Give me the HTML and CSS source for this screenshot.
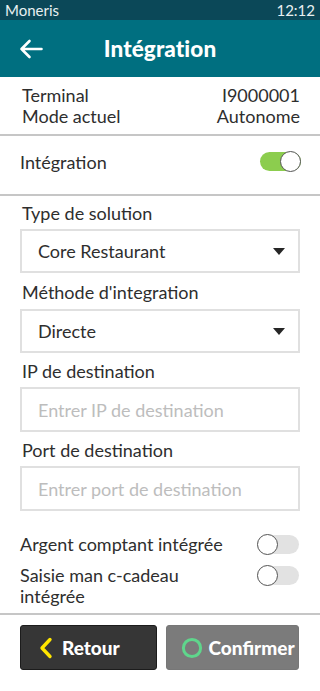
FILE: index.html
```html
<!DOCTYPE html>
<html lang="fr">
<head>
<meta charset="utf-8">
<link rel="stylesheet" href="styles.css">
</head>
<body>
<div class="screen">
  <div class="status">
    <span>Moneris</span>
    <span>12:12</span>
  </div>
  <div class="header">
    <svg class="back" width="24" height="20" viewBox="0 0 24 20">
      <path d="M22.5 10H2.5M10.5 2L2.5 10L10.5 18" fill="none" stroke="#fff" stroke-width="2.6" stroke-linecap="round" stroke-linejoin="round"/>
    </svg>
    <h1 class="title">Intégration</h1>
    <span></span>
  </div>
  <div class="info">
    <div class="info-row"><span>Terminal</span><span>I9000001</span></div>
    <div class="info-row"><span>Mode actuel</span><span>Autonome</span></div>
  </div>
  <div class="toggle-main">
    <span>Intégration</span>
    <span class="switch on"><span class="knob"></span></span>
  </div>
  <div class="form">
    <div class="label first">Type de solution</div>
    <div class="box select"><span>Core Restaurant</span><span class="caret"></span></div>
    <div class="label">Méthode d'integration</div>
    <div class="box select"><span>Directe</span><span class="caret"></span></div>
    <div class="label short">IP de destination</div>
    <div class="box input"><span>Entrer IP de destination</span></div>
    <div class="label short">Port de destination</div>
    <div class="box input"><span>Entrer port de destination</span></div>
  </div>
  <div class="options">
    <div class="opt-row">
      <span>Argent comptant intégrée</span>
      <span class="switch off"><span class="knob"></span></span>
    </div>
    <div class="opt-row two">
      <span>Saisie man c-cadeau<br>intégrée</span>
      <span class="switch off"><span class="knob"></span></span>
    </div>
  </div>
  <div class="footer">
    <button class="btn back-btn">
      <svg width="16" height="22" viewBox="0 0 16 22"><path d="M12 2.5L4 11L12 19.5" fill="none" stroke="#ffe600" stroke-width="3.4" stroke-linecap="round" stroke-linejoin="round"/></svg>
      <span>Retour</span>
    </button>
    <button class="btn confirm-btn">
      <svg width="22" height="22" viewBox="0 0 22 22"><circle cx="11" cy="11" r="8.6" fill="none" stroke="#5fd68c" stroke-width="3"/></svg>
      <span>Confirmer</span>
    </button>
  </div>
</div>
</body>
</html>
```
FILE: styles.css
```css
* { box-sizing: border-box; }
html, body { margin: 0; padding: 0; }
body {
  width: 320px;
  height: 691px;
  background: #fff;
  font-family: "Lato", "Noto Sans", sans-serif;
  color: #2e2e2e;
  overflow: hidden;
}
.screen { width: 320px; height: 691px; display: flex; flex-direction: column; }
.status {
  height: 20px;
  background: #0b4858;
  color: #e9f0f2;
  display: flex;
  justify-content: space-between;
  align-items: center;
  padding: 0 5px 0 5px;
  font-size: 15px;
  line-height: 20px;
}
.header {
  height: 57px;
  background: #006f80;
  display: grid;
  grid-template-columns: 1fr auto 1fr;
  align-items: center;
  padding: 0 19px;
}
.back { display: block; }
.title {
  margin: 0;
  color: #fff;
  font-size: 22.5px;
  font-weight: 900;
  letter-spacing: 0.1px;
  padding-bottom: 1px;
}
.info { padding: 8px 20px 7px 22px; font-size: 18px; line-height: 21px; }
.info-row { display: flex; justify-content: space-between; }
.toggle-main {
  border-top: 2px solid #c6c6c6;
  border-bottom: 2px solid #c6c6c6;
  height: 62px;
  display: flex;
  justify-content: space-between;
  align-items: center;
  padding: 0 19px 7px 20px;
  font-size: 18px;
}
.switch {
  position: relative;
  width: 41px;
  height: 19px;
  border-radius: 10px;
  display: block;
}
.switch.on { background: #8ccd4e; }
.switch.off { background: #e2e2e2; width: 42px; }
.knob {
  position: absolute;
  top: -1px;
  width: 21px;
  height: 21px;
  border-radius: 50%;
  background: #fff;
  border: 1.5px solid #555;
}
.switch.on .knob { right: 0; }
.switch.off .knob { left: 0; }
.form { padding: 0 20px; display: flex; flex-direction: column; }
.label {
  font-size: 18px;
  line-height: 20px;
  padding: 9px 0 7px 2px;
}
.label.first { padding-top: 7px; padding-bottom: 6px; }
.label.short { padding-top: 8px; padding-bottom: 6px; }
.box {
  height: 45px;
  border: 2px solid #e0e0e0;
  display: flex;
  align-items: center;
  justify-content: space-between;
  padding: 0 13px 0 16px;
  font-size: 18px;
}
.box.select { height: 44px; }
.box.input { color: #bdbdbd; }
.caret {
  width: 0; height: 0;
  border-left: 6.5px solid transparent;
  border-right: 6.5px solid transparent;
  border-top: 7px solid #262626;
}
.options { padding: 23px 21px 6px 20px; border-bottom: 2px solid #c6c6c6; }
.opt-row {
  display: flex;
  justify-content: space-between;
  align-items: center;
  font-size: 18px;
  line-height: 21px;
  height: 21px;
  margin-bottom: 10px;
}
.opt-row.two { height: auto; align-items: flex-start; margin-bottom: 0; }
.opt-row.two .switch { margin-top: 1px; }
.footer {
  display: flex;
  gap: 9px;
  padding: 10px 21px 0 20px;
}
.btn {
  flex: 1;
  height: 45px;
  border-radius: 3px;
  display: flex;
  align-items: center;
  gap: 8px;
  font-family: inherit;
  font-size: 19px;
  font-weight: 900;
  color: #fff;
  cursor: pointer;
}
.back-btn { background: #363636; border: 1px solid #1c1c1c; padding: 0 0 0 17px; }
.confirm-btn { background: #7b7b7b; border: 1px solid #777; padding: 0 0 0 14px; gap: 6px; }
```
